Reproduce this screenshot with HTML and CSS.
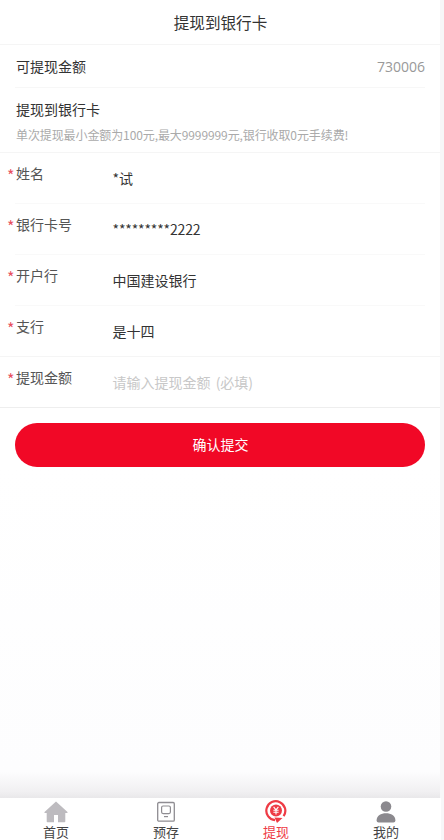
FILE: index.html
```html
<!DOCTYPE html>
<html lang="zh-CN">
<head>
    <meta charset="UTF-8">
    <meta name="viewport" content="width=device-width, initial-scale=1.0">
    <title>提现到银行卡</title>
    <link rel="stylesheet" href="styles.css">
</head>
<body>
    <div class="page">
      <header class="title-bar">提现到银行卡</header>

      <div class="balance-row">
        <span>可提现金额</span>
        <span class="balance">730006</span>
      </div>

      <div class="notice">
        <div class="notice-title">提现到银行卡</div>
        <div class="notice-text">单次提现最小金额为100元,最大9999999元,银行收取0元手续费!</div>
      </div>

      <form class="form">
        <div class="form-group">
          <label><i>*</i>姓名</label>
          <div class="value">*试</div>
        </div>
        <div class="form-group">
          <label><i>*</i>银行卡号</label>
          <div class="value card">*********2222</div>
        </div>
        <div class="form-group">
          <label><i>*</i>开户行</label>
          <div class="value">中国建设银行</div>
        </div>
        <div class="form-group last">
          <label><i>*</i>支行</label>
          <div class="value">是十四</div>
        </div>
        <div class="form-group amount">
          <label><i>*</i>提现金额</label>
          <div class="value placeholder">请输入提现金额 (必填)</div>
        </div>
      </form>

      <div class="submit-wrap">
        <button type="button" class="submit">确认提交</button>
      </div>

      <div class="spacer"></div>

      <nav class="tabbar">
        <div class="tab">
          <svg width="24" height="22" viewBox="0 0 24 22">
            <path d="M12 .5 L23.5 11 Q24 12 23 12 L21.3 12 L21.3 20.5 Q21.3 21.3 20.5 21.3 L3.5 21.3 Q2.7 21.3 2.7 20.5 L2.7 12 L1 12 Q0 12 .5 11 Z M10 14 V21.3 H14 V14 Z" fill="#bdbbbf" fill-rule="evenodd"/>
          </svg>
          <span>首页</span>
        </div>
        <div class="tab">
          <svg width="20" height="22" viewBox="0 0 20 22">
            <rect x="1.7" y="1.5" width="16.6" height="18.6" rx="1.2" fill="none" stroke="#8f8d92" stroke-width="1.3"/>
            <rect x="5.6" y="5" width="8.8" height="7.6" rx="1.5" fill="none" stroke="#8f8d92" stroke-width="1.2"/>
            <path d="M8 15.6 H12" stroke="#8f8d92" stroke-width="1.2"/>
          </svg>
          <span>预存</span>
        </div>
        <div class="tab active">
          <svg width="22" height="23" viewBox="0 0 22 23">
            <path d="M10 20.2 A9.5 9.5 0 1 1 18.6 16.2" fill="none" stroke="#ee3b45" stroke-width="2.2"/>
            <circle cx="11" cy="10.5" r="6" fill="#ee3b45"/>
            <path d="M8.6 6.8 L11 9.8 L13.4 6.8 M8.4 10.2 H13.6 M8.4 12.2 H13.6 M11 9.8 V14.6" fill="none" stroke="#fff" stroke-width="1.1"/>
            <path d="M9.5 17.6 L17.5 18 L12 23 Z" fill="#ee3b45"/>
          </svg>
          <span>提现</span>
        </div>
        <div class="tab">
          <svg width="20" height="22" viewBox="0 0 20 22">
            <circle cx="10" cy="5.5" r="5.3" fill="#8b898e"/>
            <path d="M.6 19.5 C.6 14.5 5 12.2 10 12.2 C15 12.2 19.4 14.5 19.4 19.5 Q19.4 21.5 17.4 21.5 L2.6 21.5 Q.6 21.5 .6 19.5 Z" fill="#8b898e"/>
          </svg>
          <span>我的</span>
        </div>
      </nav>
    </div>
</body>
</html>
```

FILE: styles.css
```css
* {
  margin: 0;
  padding: 0;
  box-sizing: border-box;
}
body {
  width: 444px;
  height: 840px;
  overflow: hidden;
  font-family: "Noto Sans CJK SC", "Liberation Sans", sans-serif;
  font-size: 14px;
  color: #333;
  background-color: #f7f7f8;
}
.page {
  display: flex;
  flex-direction: column;
  width: 440px;
  height: 840px;
  background-color: #fff;
}
.title-bar {
  height: 45px;
  padding-left: 1px;
  line-height: 45px;
  text-align: center;
  font-size: 15.6px;
  border-bottom: 1px solid #f5f5f5;
}
.balance-row {
  display: flex;
  justify-content: space-between;
  align-items: center;
  height: 43px;
  margin: 0 15px;
  padding-left: 1px;
  border-bottom: 1px solid #f7f7f7;
}
.balance {
  font-family: "Open Sans", sans-serif;
  font-size: 14px;
  color: #999;
}
.notice {
  height: 65px;
  padding: 11px 15px 0 16px;
  border-bottom: 1px solid #f5f5f5;
}
.notice-title {
  line-height: 20px;
}
.notice-text {
  margin-top: 7px;
  line-height: 18px;
  font-size: 12px;
  letter-spacing: -0.1px;
  color: #aaa;
}
.form-group {
  display: flex;
  height: 51px;
  margin-left: 15px;
  margin-right: 15px;
  border-bottom: 1px solid #f9f9f9;
}
.form-group.last {
  margin: 0;
  padding: 0 15px;
  border-bottom: 1px solid #f5f5f5;
}
.form-group.amount {
  margin: 0;
  padding: 0 15px;
  border-bottom: 1px solid #eee;
}
.form-group label {
  position: relative;
  width: 97.5px;
  padding: 10px 0 0 1px;
  line-height: 20px;
  color: #555;
}
.form-group label i {
  position: absolute;
  left: -8px;
  top: 12px;
  font-size: 16px;
  font-style: normal;
  color: #e8505f;
}
.value {
  padding-top: 15px;
  line-height: 20px;
  color: #333;
}
.value.card {
  letter-spacing: -0.15px;
}
.value.placeholder {
  word-spacing: 2px;
  color: #c8c8c8;
}
.submit-wrap {
  padding: 15px 15px 0;
}
.submit {
  display: block;
  width: 100%;
  height: 44px;
  padding: 0 0 2px 1px;
  border: none;
  border-radius: 22px;
  background-color: #f10826;
  color: #fff;
  font-family: inherit;
  font-size: 14px;
}
.spacer {
  flex: 1;
  background: linear-gradient(#fff 0, #fdfdfe 92%, #f1f0f2 98%, #e9e8ea 100%);
}
.tabbar {
  display: flex;
  height: 42px;
  margin-right: -1px;
  padding-left: 1px;
  background-color: #fff;
}
.tab {
  flex: 1;
  display: flex;
  flex-direction: column;
  align-items: center;
  padding-top: 3px;
  overflow: hidden;
  font-size: 13px;
  color: #444;
}
.tab svg {
  flex: none;
}
.tab.active svg {
  margin-top: -1px;
}
.tab span {
  line-height: 18px;
}
.tab.active span {
  color: #ee3b45;
}
```
